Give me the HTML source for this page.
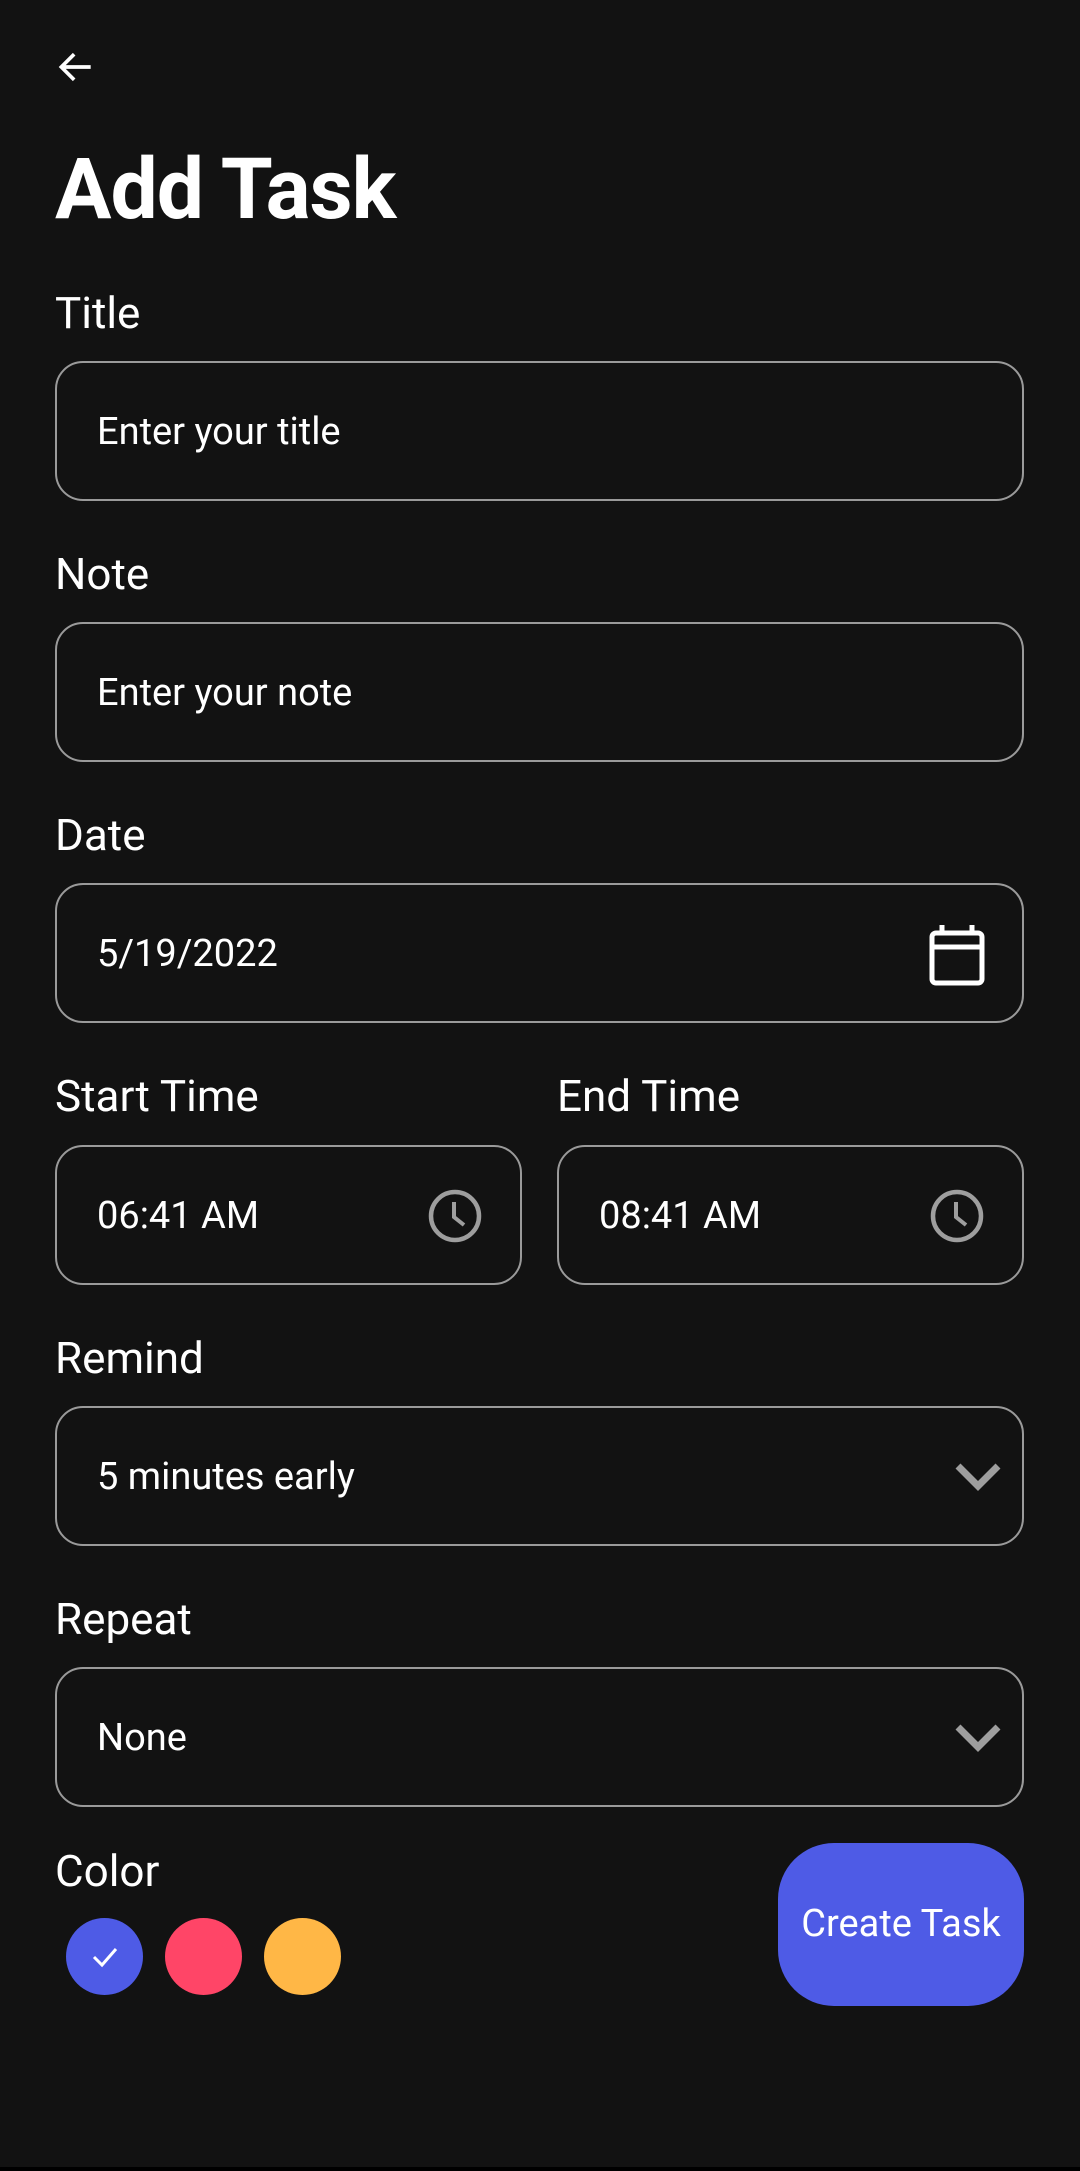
<!DOCTYPE html>
<html><head><meta charset="utf-8"><style>
*{margin:0;padding:0;box-sizing:border-box}
body{width:1080px;height:2171px;background:#121212;position:relative;overflow:hidden;font-family:"Roboto","Liberation Sans",sans-serif;color:#fff}
.a{position:absolute}
.lbl{position:absolute;left:55px;font-size:44px;line-height:50px}
.box{position:absolute;border:2.5px solid #9a9a9a;border-radius:28px;height:140px}
.txt{position:absolute;left:40px;top:2px;line-height:135px;font-size:38px}
svg{position:absolute}
</style></head><body>
<svg style="left:54px;top:45px" width="44" height="44" viewBox="0 0 24 24"><path d="M20 12H4M11 5l-7 7 7 7" fill="none" stroke="#fff" stroke-width="2"/></svg>
<div class="a" style="left:55px;top:140px;font-size:84px;font-weight:bold;line-height:100px;letter-spacing:-1px">Add Task</div>

<div class="lbl" style="top:288px">Title</div>
<div class="box" style="left:55px;top:361px;width:969px"><div class="txt">Enter your title</div></div>

<div class="lbl" style="top:549px">Note</div>
<div class="box" style="left:55px;top:622px;width:969px"><div class="txt">Enter your note</div></div>

<div class="lbl" style="top:810px">Date</div>
<div class="box" style="left:55px;top:883px;width:969px"><div class="txt">5/19/2022</div>
<svg style="left:870px;top:38px" width="60" height="64" viewBox="0 0 60 64"><rect x="5" y="10" width="50" height="50" rx="4" fill="none" stroke="#fff" stroke-width="5"/><path d="M5 24H55M15 2V12M45 2V12" stroke="#fff" stroke-width="5"/></svg>
</div>

<div class="lbl" style="top:1071px">Start Time</div>
<div class="lbl" style="top:1071px;left:557px">End Time</div>
<div class="box" style="left:55px;top:1145px;width:467px"><div class="txt">06:41 AM</div>
<svg style="left:370px;top:41px" width="56" height="56" viewBox="0 0 56 56"><circle cx="28" cy="28" r="24" fill="none" stroke="#9e9e9e" stroke-width="4.5"/><path d="M27 14V29L37 37" fill="none" stroke="#9e9e9e" stroke-width="4"/></svg></div>
<div class="box" style="left:557px;top:1145px;width:467px"><div class="txt">08:41 AM</div>
<svg style="left:370px;top:41px" width="56" height="56" viewBox="0 0 56 56"><circle cx="28" cy="28" r="24" fill="none" stroke="#9e9e9e" stroke-width="4.5"/><path d="M27 14V29L37 37" fill="none" stroke="#9e9e9e" stroke-width="4"/></svg></div>

<div class="lbl" style="top:1333px">Remind</div>
<div class="box" style="left:55px;top:1406px;width:969px"><div class="txt">5 minutes early</div>
<svg style="left:897px;top:52px" width="48" height="34" viewBox="0 0 48 34"><path d="M4 6L24 26L44 6" fill="none" stroke="#9e9e9e" stroke-width="7"/></svg></div>

<div class="lbl" style="top:1594px">Repeat</div>
<div class="box" style="left:55px;top:1667px;width:969px"><div class="txt">None</div>
<svg style="left:897px;top:52px" width="48" height="34" viewBox="0 0 48 34"><path d="M4 6L24 26L44 6" fill="none" stroke="#9e9e9e" stroke-width="7"/></svg></div>

<div class="lbl" style="top:1846px">Color</div>
<div class="a" style="left:66px;top:1918px;width:77px;height:77px;border-radius:50%;background:#4e5be6"></div>
<svg style="left:86px;top:1938px" width="38" height="38" viewBox="0 0 38 38"><path d="M8 19L16 27L30 11" fill="none" stroke="#fff" stroke-width="3"/></svg>
<div class="a" style="left:165px;top:1918px;width:77px;height:77px;border-radius:50%;background:#ff4567"></div>
<div class="a" style="left:264px;top:1918px;width:77px;height:77px;border-radius:50%;background:#ffb746"></div>

<div class="a" style="left:778px;top:1843px;width:246px;height:163px;border-radius:56px;background:#4e5be6;text-align:center;line-height:163px;font-size:38px">Create Task</div>
<div class="a" style="left:0;top:2167px;width:1080px;height:4px;background:#000"></div>
</body></html>
